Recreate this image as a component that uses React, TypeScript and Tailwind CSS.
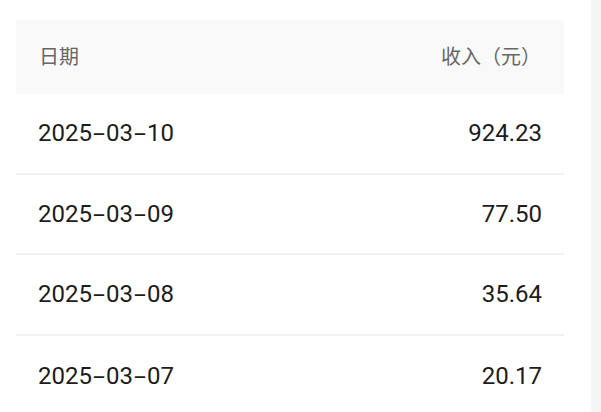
const rows = [
  { date: "2025-03-10", amount: "924.23" },
  { date: "2025-03-09", amount: "77.50" },
  { date: "2025-03-08", amount: "35.64" },
  { date: "2025-03-07", amount: "20.17" },
]

// the reference font draws "-" as wide as a digit
function DateText({ value }: { value: string }) {
  const parts = value.split("-")
  return (
    <span>
      {parts.map((p, i) => (
        <span key={i}>
          {i > 0 && <span className="inline-block w-[14px] scale-x-[1.8] text-center">-</span>}
          {p}
        </span>
      ))}
    </span>
  )
}

export default function App() {
  return (
    <div
      className="flex h-[412px] w-[601px] overflow-hidden bg-white"
      style={{ fontFamily: 'Roboto, "Noto Sans CJK SC", sans-serif' }}
    >
      <div className="flex-1 pl-4 pr-[27px] pt-5">
        <div className="flex h-[74px] items-center justify-between bg-[#f9f9f9] px-[23px] text-[20px] text-[#666666]">
          <span>日期</span>
          <span>收入（元）</span>
        </div>
        {rows.map((r, i) => (
          <div
            key={r.date}
            className={`flex h-[80.5px] items-center justify-between px-[22px] text-[24px] text-[#1c1c1c] ${
              i < rows.length - 1 ? "border-b-2 border-[#f1f1f1]" : ""
            }`}
          >
            <DateText value={r.date} />
            <span>{r.amount}</span>
          </div>
        ))}
      </div>
      <div className="w-[10px] shrink-0 bg-[#f4f5f5]" />
    </div>
  )
}
